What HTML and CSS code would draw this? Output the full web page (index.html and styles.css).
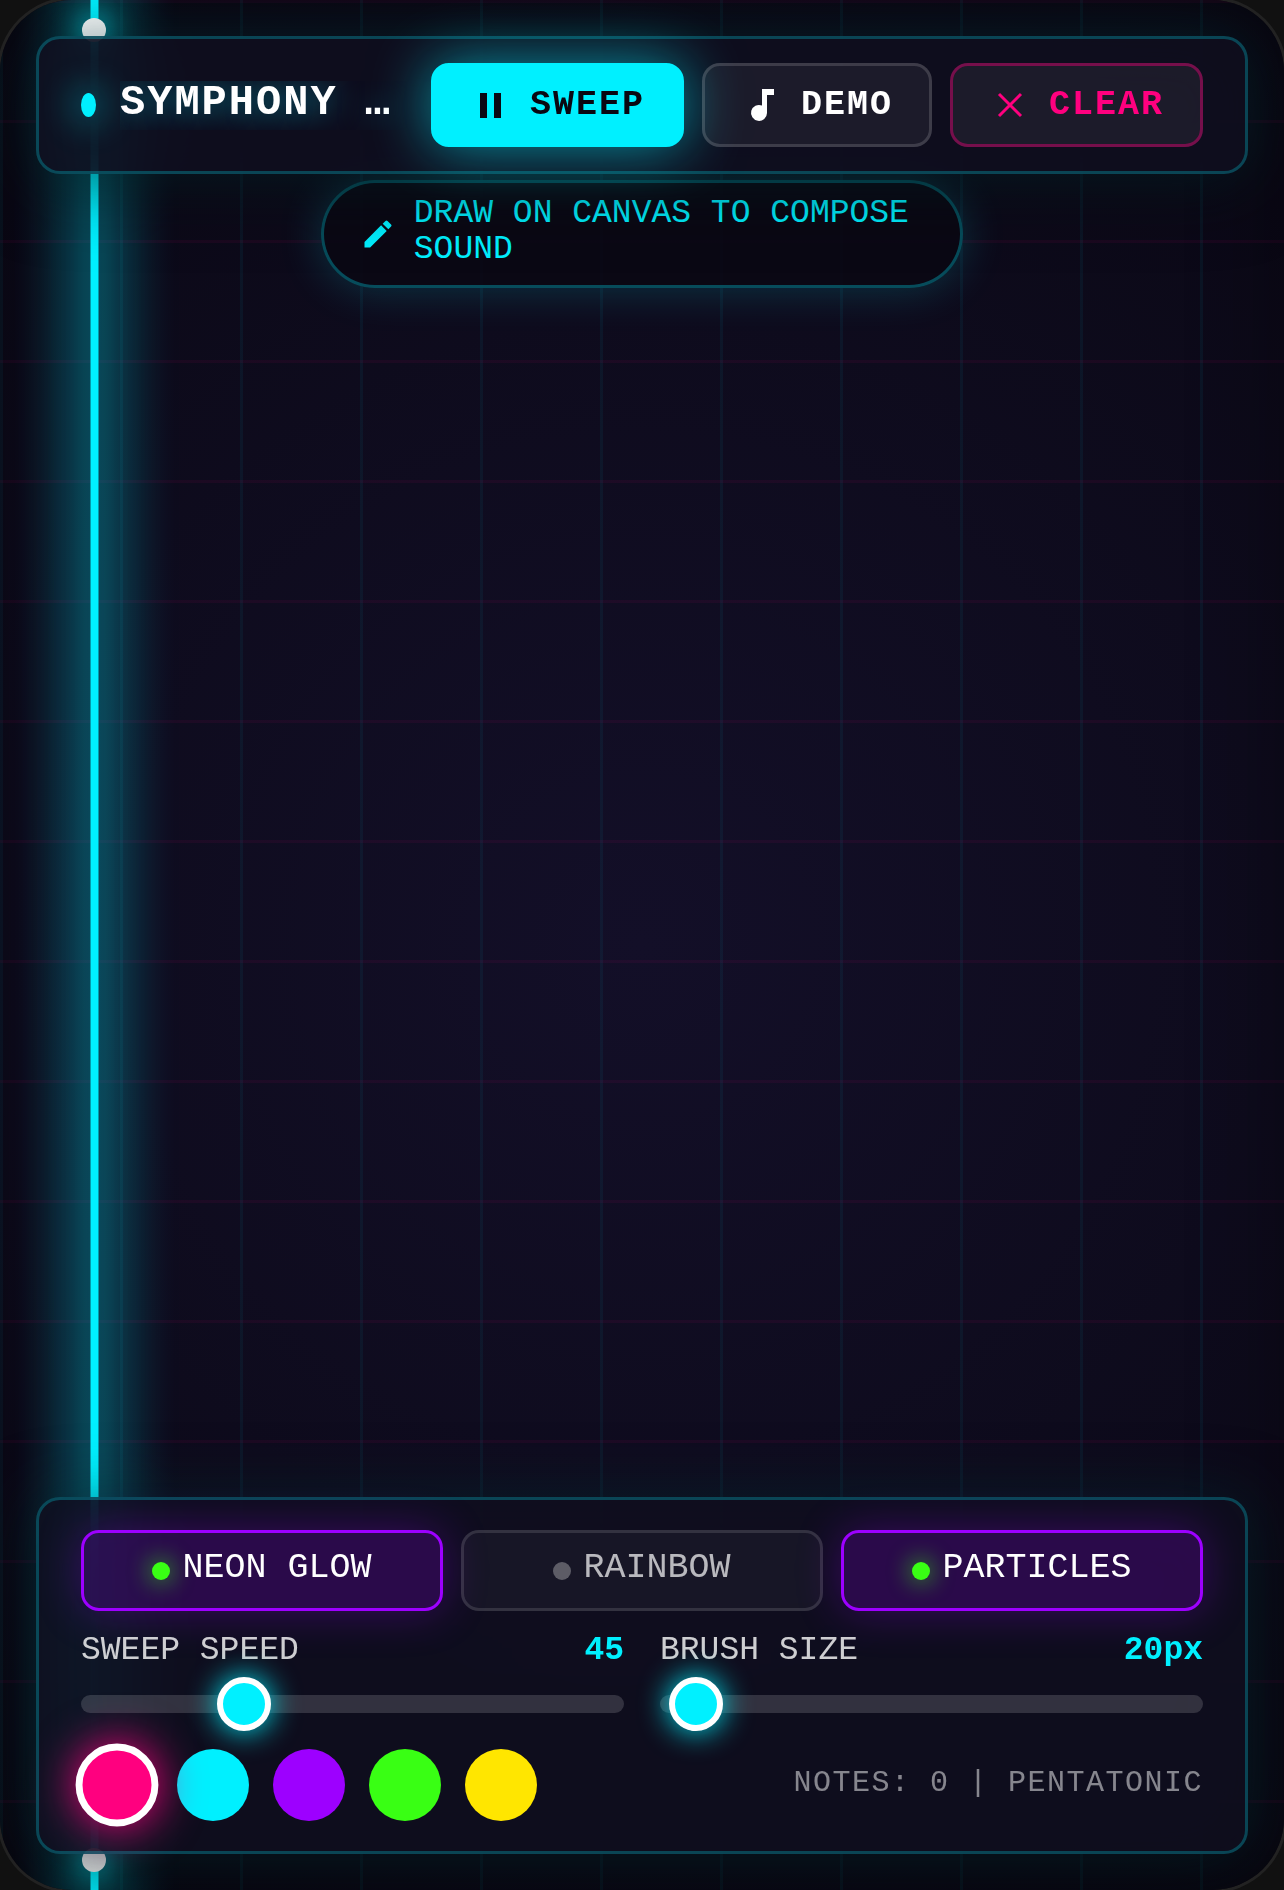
FILE: index.html
```html
<!DOCTYPE html>
<html lang="en">
<head>
    <meta charset="UTF-8">
    <meta name="viewport" content="width=device-width, initial-scale=1.0">
    <title>Symphony Pad</title>
    <link rel="stylesheet" href="styles.css">
</head>
<body>
    <div class="app">
        <div class="sweep-line"></div>

        <header class="panel top-bar">
            <span class="logo-dot"></span>
            <h1>SYMPHONY PAD</h1>
            <div class="actions">
                <button type="button" class="btn btn-active" id="sweepBtn">
                    <svg class="icon" viewBox="0 0 42 42"><path d="M10 9h7v25h-7zM24 9h7v25h-7z"/></svg>
                    SWEEP
                </button>
                <button type="button" class="btn" id="demoBtn">
                    <svg class="icon" viewBox="0 0 42 42"><path d="M21 5h12v6h-7v18a8 8 0 1 1-5-7.500z"/></svg>
                    DEMO
                </button>
                <button type="button" class="btn btn-clear" id="clearBtn">
                    <svg class="icon" viewBox="0 0 42 42"><path d="M10 10l22 22M32 10L10 32" fill="none" stroke="currentColor" stroke-width="3"/></svg>
                    CLEAR
                </button>
            </div>
        </header>

        <div class="hint">
            <svg class="hint-icon" viewBox="0 0 24 24"><path d="M3 17.250V21h3.750L17.810 9.940l-3.750-3.750zM20.710 7.040a1 1 0 0 0 0-1.410l-2.340-2.340a1 1 0 0 0-1.410 0l-1.830 1.830 3.750 3.750z"/></svg>
            <span>DRAW ON CANVAS TO COMPOSE SOUND</span>
        </div>

        <section class="panel controls">
            <div class="toggles">
                <button type="button" class="toggle on" aria-pressed="true"><i class="led"></i><span>NEON GLOW</span></button>
                <button type="button" class="toggle" aria-pressed="false"><i class="led"></i><span>RAINBOW</span></button>
                <button type="button" class="toggle on" aria-pressed="true"><i class="led"></i><span>PARTICLES</span></button>
            </div>

            <div class="sliders">
                <div class="slider">
                    <div class="slider-head">
                        <label for="speed">SWEEP SPEED</label>
                        <output for="speed" id="speedValue">45</output>
                    </div>
                    <input type="range" id="speed" min="20" max="110" value="45">
                </div>
                <div class="slider">
                    <div class="slider-head">
                        <label for="brush">BRUSH SIZE</label>
                        <output for="brush" id="brushValue">20px</output>
                    </div>
                    <input type="range" id="brush" min="18" max="126" value="20">
                </div>
            </div>

            <div class="footer-row">
                <div class="swatches">
                    <button type="button" class="swatch pink selected" aria-label="Pink"></button>
                    <button type="button" class="swatch cyan" aria-label="Cyan"></button>
                    <button type="button" class="swatch purple" aria-label="Purple"></button>
                    <button type="button" class="swatch green" aria-label="Green"></button>
                    <button type="button" class="swatch yellow" aria-label="Yellow"></button>
                </div>
                <span class="status">NOTES: 0 | PENTATONIC</span>
            </div>
        </section>
    </div>

    <script>
        const speed = document.getElementById('speed');
        const brush = document.getElementById('brush');

        speed.oninput = () => {
            document.getElementById('speedValue').innerText = speed.value;
        };
        brush.oninput = () => {
            document.getElementById('brushValue').innerText = brush.value + 'px';
        };

        document.querySelectorAll('.toggle').forEach(button => {
            button.onclick = () => {
                const on = button.classList.toggle('on');
                button.setAttribute('aria-pressed', on);
            };
        });

        document.querySelectorAll('.swatch').forEach(swatch => {
            swatch.onclick = () => {
                document.querySelector('.swatch.selected').classList.remove('selected');
                swatch.classList.add('selected');
            };
        });
    </script>
</body>
</html>
```

FILE: styles.css
```css
:root {
    --cyan: #00f0ff;
    --pink: #ff007f;
    --purple: #9d00ff;
    --green: #39ff14;
    --yellow: #ffe600;
}

* {
    box-sizing: border-box;
}

body {
    margin: 0;
    background: #111;
    color: #fff;
    font-family: "Liberation Mono", monospace;
}

button {
    font-family: inherit;
    cursor: pointer;
}

/* Canvas area with the neon grid */
.app {
    position: relative;
    display: flex;
    flex-direction: column;
    min-height: 100vh;
    padding: 36px;
    overflow: hidden;
    border-radius: 72px;
    box-shadow: 0 0 0 3px #222;
    background:
        linear-gradient(90deg, rgba(0, 240, 255, 0.05) 3px, transparent 3px) 0 0 / 120px 120px,
        linear-gradient(rgba(255, 0, 127, 0.06) 3px, transparent 3px) 0 0 / 120px 120px,
        radial-gradient(circle at center, #130f28 0%, #0a0814 100%);
}

/* dark edge around the screen */
.app::before {
    content: '';
    position: absolute;
    inset: 0;
    border-radius: inherit;
    box-shadow: inset 0 0 90px rgba(0, 0, 0, 0.35);
}

.sweep-line {
    position: absolute;
    top: 0;
    bottom: 0;
    left: 91px;
    width: 7px;
    background: var(--cyan);
    box-shadow: 0 0 0 1px rgba(0, 240, 255, 0.5), 0 0 40px 4px rgba(0, 240, 255, 0.6), 0 0 30px 52px rgba(0, 240, 255, 0.12);
}
.sweep-line::before,
.sweep-line::after {
    content: '';
    position: absolute;
    left: -9px;
    width: 24px;
    height: 24px;
    border-radius: 50%;
    background: #fff;
    box-shadow: 0 0 30px var(--cyan);
}
.sweep-line::before {
    top: 18px;
}
.sweep-line::after {
    bottom: 18px;
}

.panel {
    position: relative;
    z-index: 2;
    border: 3px solid rgba(0, 240, 255, 0.25);
    border-radius: 24px;
    background: rgba(15, 14, 30, 0.86);
    backdrop-filter: blur(36px);
    box-shadow: 0 0 60px rgba(0, 240, 255, 0.1), 0 12px 72px rgba(0, 0, 0, 0.6);
}

/* Top bar */
.top-bar {
    display: flex;
    align-items: center;
    gap: 24px;
    padding: 24px 42px;
}
.logo-dot {
    flex: none;
    width: 15px;
    height: 24px;
    border-radius: 50%;
    background: var(--cyan);
    box-shadow: 0 0 36px var(--cyan);
}
h1 {
    flex: 1;
    min-width: 0;
    margin: 0;
    padding-bottom: 4px;
    overflow: hidden;
    font-size: 42px;
    line-height: 45px;
    letter-spacing: 2px;
    white-space: nowrap;
    text-overflow: ellipsis;
    text-shadow: 0 0 30px rgba(0, 240, 255, 0.5);
}
.actions {
    display: flex;
    gap: 18px;
}
.btn {
    display: flex;
    align-items: center;
    gap: 18px;
    height: 84px;
    padding: 0 36px;
    border: 3px solid rgba(255, 255, 255, 0.15);
    border-radius: 18px;
    background: rgba(255, 255, 255, 0.06);
    color: #fff;
    font-size: 35px;
    font-weight: bold;
    letter-spacing: 2px;
}
.btn-active {
    border-color: var(--cyan);
    background: var(--cyan);
    color: #0a0812;
    box-shadow: 0 0 60px rgba(0, 240, 255, 0.6);
}
.btn-clear {
    border-color: rgba(255, 0, 127, 0.4);
    color: var(--pink);
}
.icon {
    width: 42px;
    height: 42px;
    fill: currentColor;
}

/* Hint pill */
.hint {
    position: relative;
    display: flex;
    align-items: center;
    align-self: center;
    gap: 18px;
    width: 53%;
    margin: 6px 0 36px;
    padding: 13px 36px;
    border: 3px solid rgba(0, 240, 255, 0.3);
    border-radius: 60px;
    background: rgba(10, 8, 20, 0.9);
    color: var(--cyan);
    font-size: 33px;
    line-height: 36px;
    box-shadow: 0 0 45px rgba(0, 240, 255, 0.2);
}
.hint span {
    padding-bottom: 4px;
}
.hint-icon {
    flex: none;
    width: 36px;
    height: 36px;
    fill: currentColor;
}

/* Bottom controls */
.controls {
    display: flex;
    flex-direction: column;
    gap: 18px;
    margin-top: auto;
    padding: 30px 42px;
}
.toggles {
    display: grid;
    grid-template-columns: repeat(3, 1fr);
    gap: 18px;
}
.toggle {
    display: flex;
    align-items: center;
    justify-content: center;
    gap: 12px;
    height: 81px;
    border: 3px solid rgba(255, 255, 255, 0.12);
    border-radius: 18px;
    background: rgba(255, 255, 255, 0.04);
    color: rgba(255, 255, 255, 0.7);
    font-size: 35px;
}
.toggle span {
    padding-bottom: 6px;
}
.toggle.on {
    border-color: var(--purple);
    background: rgba(157, 0, 255, 0.2);
    color: #fff;
    box-shadow: 0 0 45px rgba(157, 0, 255, 0.3);
}
.led {
    width: 18px;
    height: 18px;
    border-radius: 50%;
    background: rgba(255, 255, 255, 0.3);
}
.toggle.on .led {
    background: var(--green);
    box-shadow: 0 0 24px var(--green);
}

.sliders {
    display: grid;
    grid-template-columns: 1fr 1fr;
    gap: 36px;
}
.slider {
    display: flex;
    flex-direction: column;
    gap: 4px;
}
.slider-head {
    display: flex;
    justify-content: space-between;
    font-size: 33px;
    line-height: 44px;
}
.slider-head label {
    color: rgba(255, 255, 255, 0.8);
}
.slider-head output {
    color: var(--cyan);
    font-weight: bold;
}
input[type="range"] {
    -webkit-appearance: none;
    appearance: none;
    width: 100%;
    height: 54px;
    margin: 0;
    background: transparent;
}
input[type="range"]::-webkit-slider-runnable-track {
    height: 18px;
    border-radius: 9px;
    background: rgba(255, 255, 255, 0.15);
}
input[type="range"]::-webkit-slider-thumb {
    -webkit-appearance: none;
    width: 54px;
    height: 54px;
    margin-top: -18px;
    border: 6px solid #fff;
    border-radius: 50%;
    background: var(--cyan);
    box-shadow: 0 0 30px var(--cyan);
}

.footer-row {
    display: flex;
    align-items: center;
    justify-content: space-between;
}
.swatches {
    display: flex;
    gap: 24px;
}
.swatch {
    width: 72px;
    height: 72px;
    padding: 0;
    border: none;
    border-radius: 50%;
}
.swatch.selected {
    border: 6px solid #fff;
    box-shadow: 0 0 40px var(--pink);
    transform: scale(1.15);
}
.pink {
    background: var(--pink);
}
.cyan {
    background: var(--cyan);
}
.purple {
    background: var(--purple);
}
.green {
    background: var(--green);
}
.yellow {
    background: var(--yellow);
}
.status {
    padding-bottom: 4px;
    color: rgba(255, 255, 255, 0.5);
    font-size: 30px;
    letter-spacing: 0.05em;
}
```
